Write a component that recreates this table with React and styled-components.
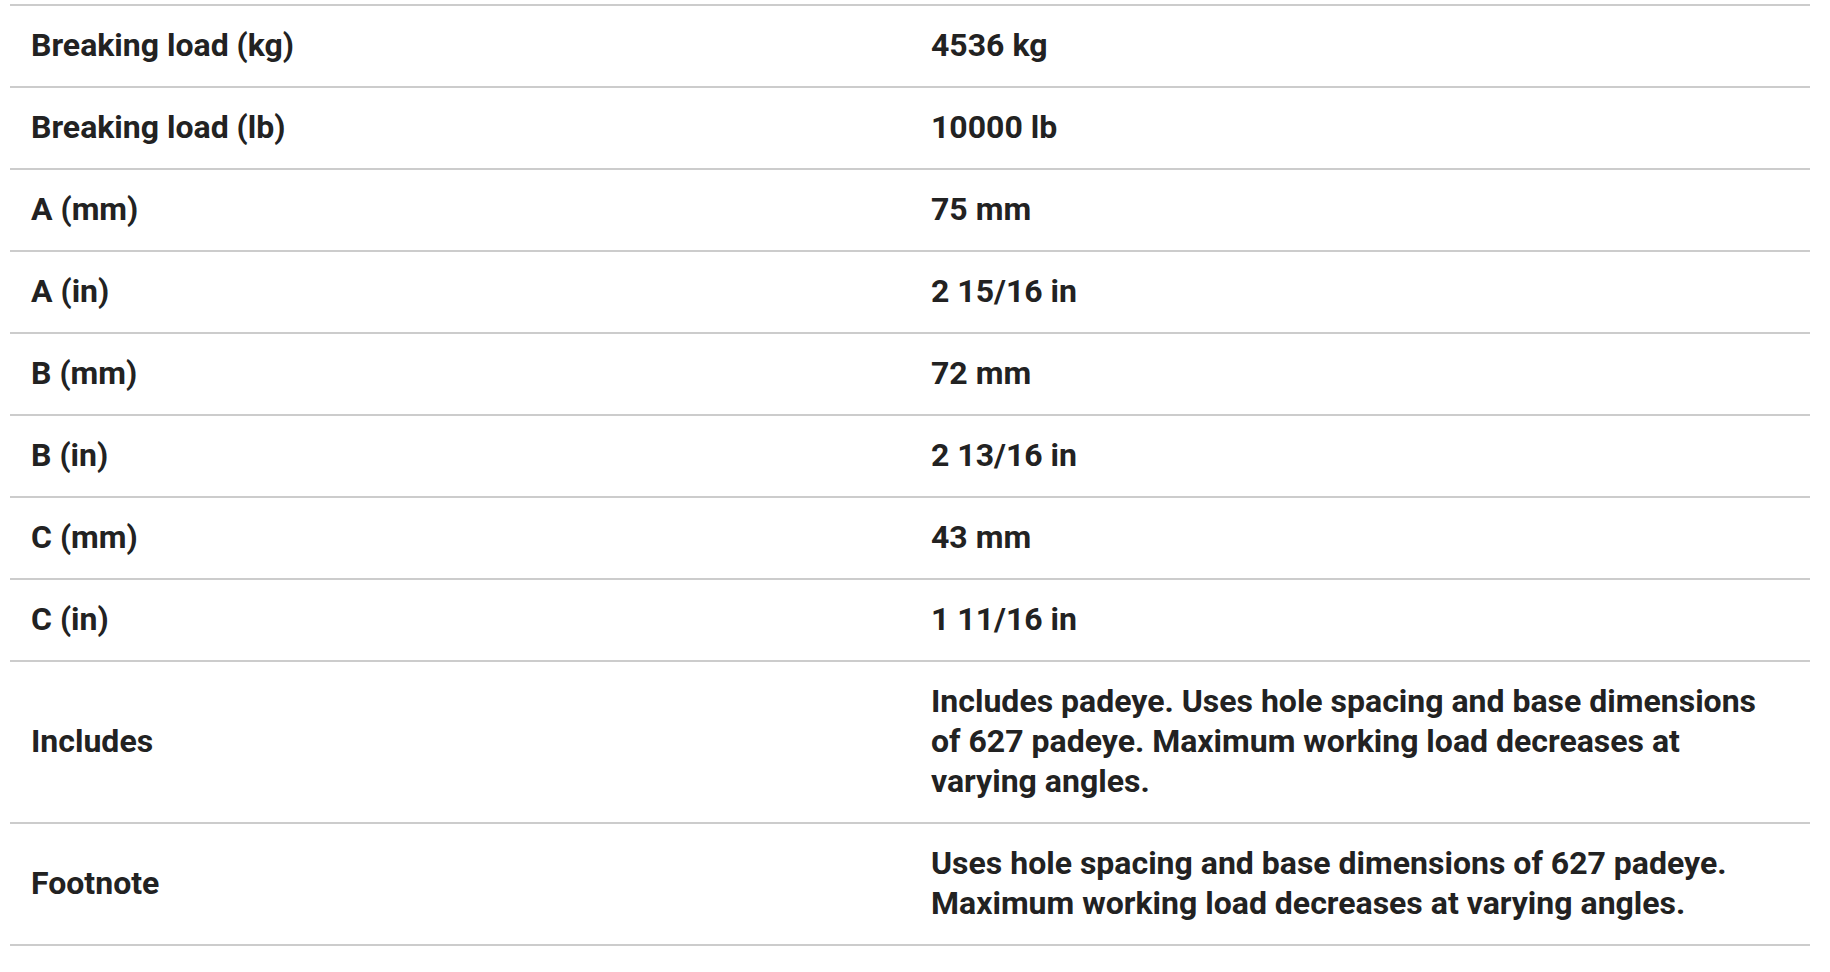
import React from "react";
import styled, { createGlobalStyle } from "styled-components";

const specs = [
    { label: "Breaking load (kg)", value: "4536 kg" },
    { label: "Breaking load (lb)", value: "10000 lb" },
    { label: "A (mm)", value: "75 mm" },
    { label: "A (in)", value: "2 15/16 in" },
    { label: "B (mm)", value: "72 mm" },
    { label: "B (in)", value: "2 13/16 in" },
    { label: "C (mm)", value: "43 mm" },
    { label: "C (in)", value: "1 11/16 in" },
    {
        label: "Includes",
        value: "Includes padeye. Uses hole spacing and base dimensions of 627 padeye. Maximum working load decreases at varying angles.",
    },
    {
        label: "Footnote",
        value: "Uses hole spacing and base dimensions of 627 padeye. Maximum working load decreases at varying angles.",
    },
];

function App() {
    return (
        <>
            <GlobalStyle />
            <Wrapper>
                <SpecTable>
                    <tbody>
                        {specs.map((row) => (
                            <Row key={row.label}>
                                <Cell>{row.label}</Cell>
                                <Cell>{row.value}</Cell>
                            </Row>
                        ))}
                    </tbody>
                </SpecTable>
            </Wrapper>
        </>
    );
}

const GlobalStyle = createGlobalStyle`
    body {
        margin: 0;
        background: #fff;
        font-family: Roboto, "Liberation Sans", sans-serif;
    }
`;

const Wrapper = styled.div`
    padding: 4px 20px 0 10px;
`;

const SpecTable = styled.table`
    width: 1800px;
    border-collapse: collapse;
    table-layout: fixed;
`;

const Row = styled.tr`
    border-top: 2px solid #cccccc;
    border-bottom: 2px solid #cccccc;
`;

const Cell = styled.td`
    width: 50%;
    padding: 19px 40px 21px 21px;
    font-size: 32px;
    line-height: 40px;
    font-weight: 700;
    color: #222222;
    vertical-align: middle;
`;

export default App;
